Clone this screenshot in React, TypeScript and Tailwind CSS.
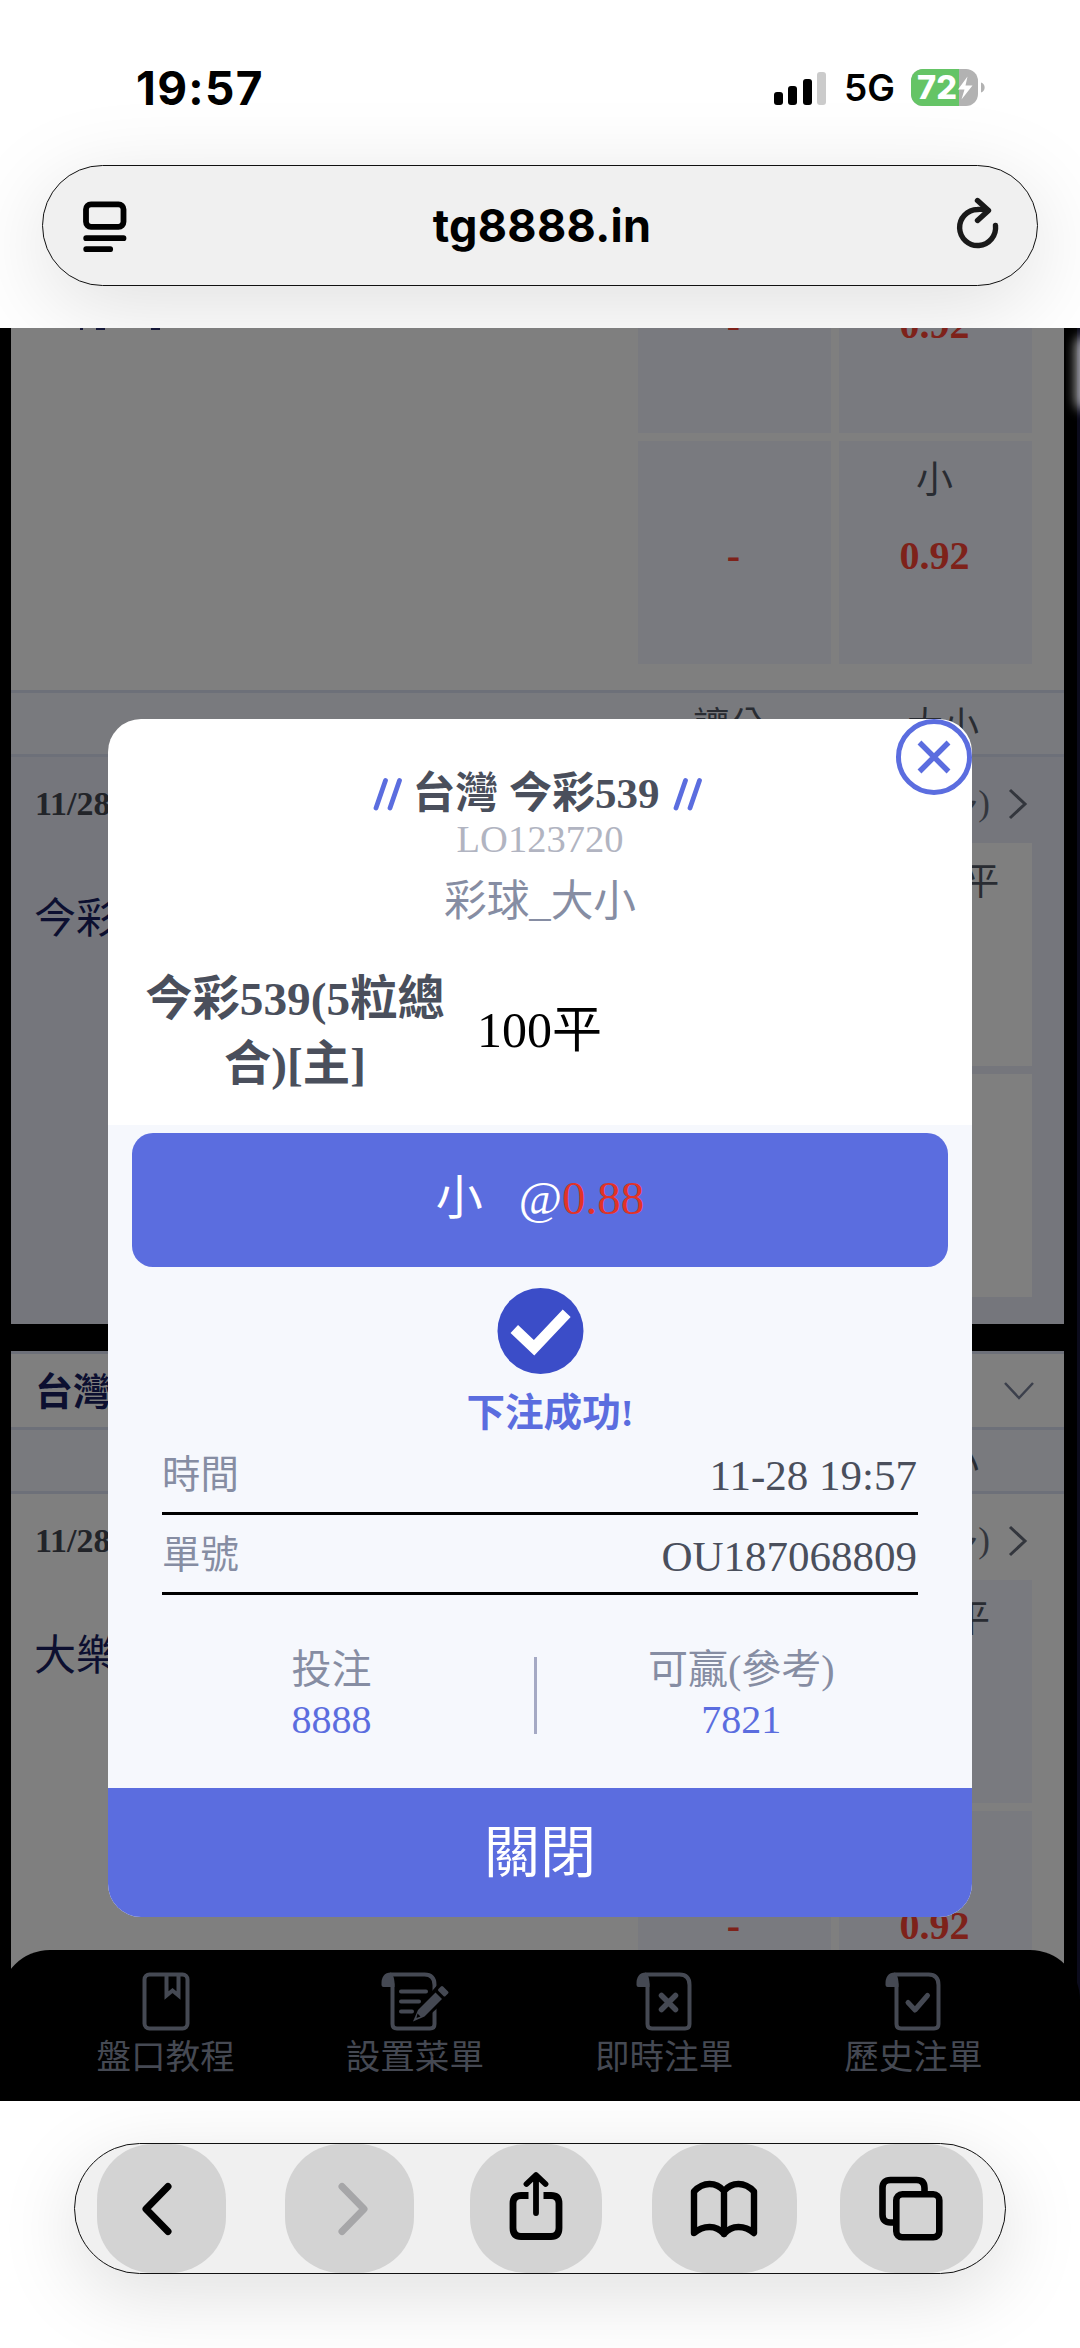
import React from 'react';
import clsx from 'clsx';

type Match = {
  date: string;
  name: string;
  line: string;
  spread: string;
  tinted: boolean;
};

const matches: Match[] = [
  { date: '11/28', name: '今彩', line: '大100平', spread: '', tinted: true },
  { date: '11/28', name: '大樂', line: '大49平', spread: '-', tinted: false },
];

const NAV_STROKE = '#454953';

function StatusBar() {
  return (
    <div className="h-[165px] flex items-start justify-between pt-[58px] pl-[136px] pr-[95px]">
      <span className="text-[46px] leading-[60px] font-bold tracking-[1.3px] text-black">19:57</span>
      <div className="flex items-center pt-[11px]">
        <div className="flex items-end gap-[5.5px] h-[34px]">
          <i className="block w-[9px] h-[13px] rounded-[3px] bg-black" />
          <i className="block w-[9px] h-[19px] rounded-[3px] bg-black" />
          <i className="block w-[9px] h-[26px] rounded-[3px] bg-black" />
          <i className="block w-[9px] h-[33px] rounded-[3px] bg-[#cbcbcb]" />
        </div>
        <span className="ml-[18px] w-[52px] text-[37px] leading-[37px] font-semibold text-black">5G</span>
        <svg className="ml-[15px]" width="74" height="37" viewBox="0 0 74 37">
          <defs>
            <clipPath id="battery">
              <rect x="0" y="0" width="67" height="37" rx="12" />
            </clipPath>
          </defs>
          <g clipPath="url(#battery)">
            <rect width="67" height="37" fill="#b2b2b2" />
            <rect width="48" height="37" fill="#65c466" />
          </g>
          <path d="M70 13.5c2.5.8 3.6 2.7 3.6 5s-1.1 4.200-3.600 5z" fill="#b2b2b2" />
          <text x="6" y="30" fontSize="32" fontWeight="800" fill="#fff" textLength="40" lengthAdjust="spacingAndGlyphs">72</text>
          <path d="M56.5 7.5 47 20.500h6.500L50.500 30.500 61.500 16.500h-7z" fill="#fff" />
        </svg>
      </div>
    </div>
  );
}

function AddressBar() {
  return (
    <div className="mx-[42px] h-[121px] rounded-full border-[1.5px] border-[#111] bg-[#f0f0f0] flex items-center justify-between pl-[40px] pr-[36px] shadow-[0_20px_90px_rgba(0,0,0,0.13)]">
      <svg width="44" height="52" viewBox="0 0 44 52" fill="none" stroke="#000" strokeWidth="5.8" strokeLinecap="round">
        <rect x="3" y="4.3" width="37.5" height="22.5" rx="5" />
        <path d="M3.200 38.200h37.300M3.200 49.200h24" />
      </svg>
      <span className="text-[45px] leading-[60px] font-bold tracking-[0.3px] text-black">tg8888.in</span>
      <svg className="overflow-visible" width="44" height="52" viewBox="0 0 44 52" fill="none" stroke="#1a1a1a" strokeWidth="5.4" strokeLinecap="round" strokeLinejoin="round">
        <path d="M38.500 25.500A18 18 0 1 1 20.500 9.500Q26 9 31 10.500" />
        <path d="M20.500 0.500 31.500 10.500 20.500 20.500" />
      </svg>
    </div>
  );
}

function OddsCell({ label, odds, tinted }: { label?: string; odds?: string; tinted?: boolean }) {
  return (
    <div className={clsx('h-[223px] flex flex-col items-center pt-[13px] pr-[2px]', tinted ? 'bg-[#7f7f7f]' : 'bg-[#797a7f]')}>
      <span className="h-[53px] text-[37px] leading-[53px] text-[#292c32] whitespace-nowrap">{label}</span>
      <span className="mt-[26px] text-[40px] leading-[46px] font-bold text-[#7e221a]">{odds}</span>
    </div>
  );
}

function OddsGrid({ line, spread, tinted }: { line?: string; spread?: [string, string]; tinted?: boolean }) {
  return (
    <div className="grid grid-cols-[193px_193px] gap-x-[8px] gap-y-[8px]">
      <OddsCell odds={spread?.[0]} tinted={tinted} />
      <OddsCell label={line} odds="0.92" tinted={tinted} />
      <OddsCell odds={spread?.[1]} tinted={tinted} />
      <OddsCell label="小" odds="0.92" tinted={tinted} />
    </div>
  );
}

function ColumnHeader({ spread }: { spread?: string }) {
  return (
    <div className="h-[67px] border-y-[3px] border-[#6d7079] bg-[#797a7e] flex justify-end pr-[33px] text-[36px] leading-[66px] text-[#292c32]">
      <span className="w-[201px] text-center pr-[16px]">{spread}</span>
      <span className="w-[193px] text-center pl-[17px]">大小</span>
    </div>
  );
}

function MatchBlock({ match }: { match: Match }) {
  return (
    <div className={clsx('h-[567px]', match.tinted ? 'bg-[#75767c]' : 'bg-[#7f7f7f]')}>
      <div className="h-[86px] flex items-center justify-between pl-[24px] pr-[36px] pt-[7px]">
        <span className="text-[34px] leading-[40px] font-bold text-[#222429]">{match.date}</span>
        <div className="flex items-center text-[35px] leading-[40px] text-[#33363d]">
          <span>(多)</span>
          <svg className="ml-[18px]" width="20" height="32" viewBox="0 0 20 32" fill="none" stroke="#33363d" strokeWidth="3">
            <path d="M2 2 17 16 2 30" />
          </svg>
        </div>
      </div>
      <div className="flex justify-between pl-[23px] pr-[32px]">
        <span className="pt-[46px] text-[42px] leading-[60px] text-[#0c0f30]">{match.name}</span>
        <OddsGrid line={match.line} spread={['', match.spread]} tinted={match.tinted} />
      </div>
    </div>
  );
}

function NavIcon({ kind }: { kind: 'book' | 'edit' | 'cross' | 'check' }) {
  return (
    <svg width="72" height="62" viewBox="0 0 72 62" fill="none" stroke={NAV_STROKE} strokeWidth="4" strokeLinecap="round" strokeLinejoin="round">
      {kind === 'book' && (
        <>
          <rect x="14.5" y="4.5" width="43" height="54" rx="5" />
          <path d="M36.500 5v20.500l6-5 6 5V5" strokeLinecap="butt" strokeLinejoin="miter" />
        </>
      )}
      {kind !== 'book' && (
        <g transform={kind === 'edit' ? 'translate(-6 0)' : 'translate(0 0)'}>
          <path d="M19.500 14V54q0 4.500 4.500 4.500H57q4.500 0 4.500-4.500V15q0-10.500-10-10.500H18" />
          <path d="M8.500 15Q8 2.500 18 2.500 21 6 21.500 12V17H10.500Q8.500 17 8.500 15z" fill={NAV_STROKE} stroke="none" />
        </g>
      )}
      {kind === 'edit' && (
        <>
          <path d="M22 21.500h25M22 31.500h18M22 41.500h11" />
          <path d="M60 17 40 40l-5 12 10-5L69 25z" fill="#000" stroke="#000" strokeWidth="5" />
          <path d="M56.500 22.500 39 40l-5 11.500L45.500 46.500 63 29z" fill={NAV_STROKE} stroke="none" />
          <path d="m38.500 43.500 3 3-4 1.500z" fill="#000" stroke="none" />
          <path d="m60.500 20 2.500-2.500 5 5-2.500 2.500z" fill={NAV_STROKE} strokeWidth="3" />
        </>
      )}
      {kind === 'cross' && <path d="m33.500 25.500 14 14M47.500 25.500l-14 14" strokeWidth="5.5" />}
      {kind === 'check' && <path d="m31 32.500 7 7.500 12.500-14.500" strokeWidth="5" />}
    </svg>
  );
}

function BottomNav() {
  const items = [
    { kind: 'book' as const, label: '盤口教程' },
    { kind: 'edit' as const, label: '設置菜單' },
    { kind: 'cross' as const, label: '即時注單' },
    { kind: 'check' as const, label: '歷史注單' },
  ];
  return (
    <div className="absolute inset-x-0 bottom-0 h-[151px] rounded-t-[50px] bg-black grid grid-cols-4 pl-[41px] pr-[42px] pt-[20px]">
      {items.map((item) => (
        <div key={item.label} className="flex flex-col items-center">
          <NavIcon kind={item.kind} />
          <span className="text-[34.6px] leading-[50px] text-[#454953] whitespace-nowrap">{item.label}</span>
        </div>
      ))}
    </div>
  );
}

function Page() {
  return (
    <div className="h-full pl-[11px] pr-[16px]">
      <div className="h-[362px] bg-[#7f7f7f] flex justify-between pr-[32px]">
        <div className="flex items-start pl-[69px]">
          <i className="block w-[3px] h-[2px] bg-[#151838]" />
          <i className="block ml-[13px] w-[9px] h-[2px] bg-[#151838]" />
          <i className="block ml-[46px] w-[9px] h-[2px] bg-[#151838]" />
        </div>
        <div className="-mt-[118px]">
          <OddsGrid spread={['-', '-']} />
        </div>
      </div>
      <ColumnHeader spread="讓分" />
      <MatchBlock match={matches[0]} />
      <div className="mt-[27px] h-[76px] border-t-[3px] border-[#6d7079] bg-[#7f7f7f] flex items-center justify-between pl-[24px] pr-[29px]">
        <span className="pt-[2px] text-[38px] leading-[50px] font-bold text-[#0c0f30]">台灣</span>
        <svg width="32" height="20" viewBox="0 0 32 20" fill="none" stroke="#3c404c" strokeWidth="2.5">
          <path d="M2 2 16 17 30 2" />
        </svg>
      </div>
      <ColumnHeader />
      <MatchBlock match={matches[1]} />
    </div>
  );
}

// thin sliver of the panel that is docked off the right edge
function EdgeHandle() {
  return (
    <div className="absolute right-0 top-0 w-[14px] h-full overflow-hidden">
      <div className="ml-auto w-[3px] h-full bg-[#0b0b1c]" />
      <div className="absolute -right-[15px] top-[8px] w-[19px] h-[74px] rounded-[10px] bg-white/70 blur-[6px]" />
    </div>
  );
}

function Slashes() {
  return (
    <svg width="30" height="34" viewBox="0 0 30 34" stroke="#5b6ddf" strokeWidth="4.8" strokeLinecap="round">
      <path d="M3 31 12.500 3.500M17 31 26.500 3.500" />
    </svg>
  );
}

function BetDialog() {
  return (
    <div className="absolute left-[108px] top-[391px] w-[864px] h-[1198px] rounded-[33px] overflow-hidden bg-white flex flex-col">
      <button className="absolute right-0 top-0 w-[76px] h-[76px] rounded-full border-[5.5px] border-[#5b6ddf] bg-white flex items-center justify-center">
        <svg width="36" height="36" viewBox="0 0 36 36" stroke="#5b6ddf" strokeWidth="5.5" strokeLinecap="butt">
          <path d="m3.500 3.500 29 29M32.500 3.500l-29 29" />
        </svg>
      </button>

      <div className="h-[406px] shrink-0 flex flex-col items-center">
        <div className="mt-[43px] h-[63px] flex items-center pr-[4px]">
          <Slashes />
          <h2 className="ml-[9px] mr-[13px] text-[43px] leading-[63px] font-bold text-[#4a4f5c]">台灣 今彩539</h2>
          <Slashes />
        </div>
        <p className="-mt-[2px] h-[32px] text-[38.5px] leading-[32px] text-[#b1b4c1]">LO123720</p>
        <p className="mt-[16px] text-[42.7px] leading-[62px] text-[#868da3]">彩球_大小</p>
        <div className="mt-[34px] w-full flex items-center pl-[30px]">
          <p className="w-[314px] text-center text-[47.3px] leading-[65px] font-bold text-[#4a4f5c]">今彩539(5粒總<br />合)[主]</p>
          <p className="ml-[25px] -mt-[3px] text-[50px] leading-[65px] text-black">100平</p>
        </div>
      </div>

      <div className="flex-1 bg-[#f6f8fd] flex flex-col items-center pt-[8px]">
        <div className="w-[816px] h-[134px] rounded-[21px] bg-[#5b6ddf] flex items-center justify-center pb-[4px] text-[47px] leading-[60px] text-white">
          <span>小</span>
          <span className="ml-[36px]">@</span>
          <span className="text-[#e23327]">0.88</span>
        </div>
        <svg className="mt-[20px] shrink-0" width="87" height="88" viewBox="0 0 88 88">
          <circle cx="44" cy="44" r="43.5" fill="#3b4dc8" />
          <path d="m17.500 42 20 19L70.500 26" fill="none" stroke="#fff" strokeWidth="11" />
        </svg>
        <p className="mt-[11px] pl-[20px] text-[38.6px] leading-[54px] font-bold text-[#5b6ddf]">下注成功!</p>

        <div className="w-[756px]">
          <div className="h-[75px] border-b-[3px] border-black flex items-start justify-between pt-[6px] pr-[1px]">
            <span className="-mt-[1px] text-[38.4px] leading-[60px] text-[#868da3]">時間</span>
            <span className="text-[43px] leading-[60px] text-[#4a4f5c]">11-28 19:57</span>
          </div>
          <div className="h-[80px] border-b-[3px] border-black flex items-start justify-between pt-[12px] pr-[1px]">
            <span className="-mt-[2px] text-[38.4px] leading-[60px] text-[#868da3]">單號</span>
            <span className="text-[43px] leading-[60px] text-[#4a4f5c]">OU187068809</span>
          </div>
        </div>

        <div className="mt-[46px] w-[820px] flex items-center pr-[4px] text-[40px]">
          <div className="w-[404px] pr-[1px] text-center">
            <p className="leading-[58px] text-[#868da3]">投注</p>
            <p className="-mt-[2px] leading-[46px] text-[#5b6ddf]">8888</p>
          </div>
          <div className="w-[2.5px] h-[77px] mt-[6px] bg-[#a5a9c4]" />
          <div className="flex-1 text-center">
            <p className="leading-[58px] text-[#868da3]">可贏(參考)</p>
            <p className="-mt-[2px] leading-[46px] text-[#5b6ddf]">7821</p>
          </div>
        </div>
      </div>

      <button className="h-[129px] shrink-0 bg-[#5b6ddf] text-[56px] leading-[80px] text-white">關閉</button>
    </div>
  );
}

function BrowserToolbar() {
  return (
    <div className="h-[247px] pt-[42px] bg-white overflow-hidden">
      <div className="mx-[74px] h-[131px] rounded-full border-[1.5px] border-[#111] bg-[#f0f0f0] flex pl-[21.5px] shadow-[0_20px_80px_rgba(0,0,0,0.13)]">
        <button className="w-[129px] h-full rounded-[56px] bg-[#d3d3d3] flex items-center justify-center">
          <svg className="-ml-[9px]" width="32" height="54" viewBox="0 0 32 54" fill="none" stroke="#000" strokeWidth="7" strokeLinecap="round" strokeLinejoin="round">
            <path d="M27 4.500 5 27l22 22.500" />
          </svg>
        </button>
        <button className="ml-[59px] w-[129px] h-full rounded-[56px] bg-[#d3d3d3] flex items-center justify-center">
          <svg className="ml-[7px]" width="32" height="54" viewBox="0 0 32 54" fill="none" stroke="#a6a6a8" strokeWidth="7" strokeLinecap="round" strokeLinejoin="round">
            <path d="M5 4.500 27 27 5 49.500" />
          </svg>
        </button>
        <button className="ml-[56px] w-[132px] h-full rounded-[56px] bg-[#d3d3d3] flex items-center justify-center">
          <svg className="-mt-[6px]" width="56" height="70" viewBox="0 0 56 70" fill="none" stroke="#000" strokeWidth="6.8" strokeLinecap="round" strokeLinejoin="round">
            <path d="M20.500 24.500H13q-8 0-8 8v24.500q0 8.500 8 8.500h30q8 0 8-8.500V32.500q0-8-8-8h-7.500" strokeLinecap="butt" />
            <path d="M28 5v37M18.500 13 28 4l9.500 9" strokeWidth="5.8" />
          </svg>
        </button>
        <button className="ml-[50px] w-[145px] h-full rounded-[56px] bg-[#d3d3d3] flex items-center justify-center">
          <svg width="68" height="58" viewBox="0 0 68 58" fill="none" stroke="#000" strokeWidth="6.4" strokeLinecap="round" strokeLinejoin="round">
            <path d="M34 11v43M34 11Q28 4 19.500 4T4 11.500V53Q11 47 19.500 47T34 54Q40 47 48.500 47T64 53V11.500Q57 4 48.500 4T34 11" />
          </svg>
        </button>
        <button className="ml-[43px] w-[143px] h-full rounded-[56px] bg-[#d3d3d3] flex items-center justify-center">
          <svg width="66" height="66" viewBox="0 0 66 66" fill="none" stroke="#000" strokeWidth="6.6">
            <rect x="18.3" y="18.3" width="43" height="43" rx="6" />
            <path d="M18 46.500H12.500q-8 0-8-8V12q0-8 8-8H38.500q8 0 8 8v6" />
          </svg>
        </button>
      </div>
    </div>
  );
}

export default function App() {
  return (
    <div className="w-[1080px] h-[2348px] overflow-hidden bg-white flex flex-col font-['Inter','Noto_Sans_CJK_TC',sans-serif]">
      <header className="h-[328px] overflow-hidden shrink-0">
        <StatusBar />
        <AddressBar />
      </header>
      <main className="relative h-[1773px] shrink-0 overflow-hidden bg-black font-['Liberation_Serif','Noto_Sans_CJK_TC',serif]">
        <Page />
        <EdgeHandle />
        <BottomNav />
        <BetDialog />
      </main>
      <BrowserToolbar />
    </div>
  );
}
